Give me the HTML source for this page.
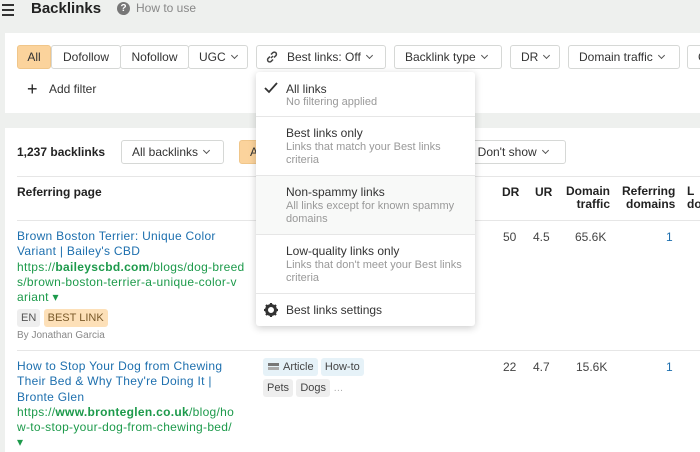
<!DOCTYPE html>
<html><head><style>
*{box-sizing:border-box;margin:0;padding:0}
body{width:700px;height:452px;overflow:hidden;background:#eef0ee;font-family:"Liberation Sans",sans-serif;font-size:12px;color:#222;position:relative}
.a{position:absolute;white-space:nowrap}
.btn{position:absolute;height:24px;border:1px solid #d6d8d6;border-radius:3px;background:#fff;line-height:22px;font-size:12px;color:#333;padding:0 10px;white-space:nowrap}
.chev{display:inline-block;width:5px;height:5px;border-right:1.3px solid #555;border-bottom:1.3px solid #555;transform:rotate(45deg);margin-left:6px;position:relative;top:-3px}
.panel{position:absolute;background:#fff;left:5px;right:0}
.h{font-weight:bold;font-size:12px;color:#222}
.blue{color:#1d6fae}
.green{color:#1d9a4b}
.rp{letter-spacing:0.3px}
.menu{position:absolute;left:256px;top:72px;width:219px;height:254px;background:#fff;border-radius:3px;box-shadow:0 2px 8px rgba(0,0,0,.2)}
.mi{position:absolute;left:0;right:0;border-bottom:1px solid #e6e6e6}
.mt{position:absolute;left:30px;font-size:12px;color:#333}
.ms{position:absolute;left:30px;font-size:11px;color:#999;line-height:13px;white-space:normal;width:180px}
.tag{display:inline-block;height:18px;line-height:18px;padding:0 4px;border-radius:3px;font-size:11px}
</style></head><body>
<div class="a" style="left:2px;top:4px;width:12px;height:2px;background:#333;box-shadow:0 5px 0 #333,0 10px 0 #333"></div>
<div class="a" style="left:31px;top:0px;font-size:15px;font-weight:bold;color:#222">Backlinks</div>
<div class="a" style="left:117px;top:2px;width:13px;height:13px;border-radius:50%;background:#777;color:#fff;font-size:10px;font-weight:bold;text-align:center;line-height:13px">?</div>
<div class="a" style="left:136px;top:1px;font-size:12px;color:#888">How to use</div>

<div class="panel" style="top:33px;height:80px"></div>
<div class="btn" style="left:17px;top:45px;width:34px;background:#fbd39c;border-color:#f0c68a;padding:0;text-align:center">All</div>
<div class="btn" style="left:51px;top:45px;width:70px;padding:0;text-align:center">Dofollow</div>
<div class="btn" style="left:120px;top:45px;width:69px;padding:0;text-align:center">Nofollow</div>
<div class="btn" style="left:188px;top:45px;width:60px;padding:0 0 0 10px">UGC<span class="chev"></span></div>
<div class="btn" style="left:256px;top:45px;width:130px;padding-left:30px">Best links: Off<span class="chev"></span></div>
<svg class="a" style="left:265px;top:50px" width="14" height="14" viewBox="0 0 14 14" fill="none" stroke="#444" stroke-width="1.5"><path d="M6 8l2-2M5 6.5L3.2 8.3a2 2 0 003 3L8 9.5M9 7.5l1.8-1.8a2 2 0 00-3-3L6 4.5"/></svg>
<div class="btn" style="left:394px;top:45px;width:108px">Backlink type<span class="chev"></span></div>
<div class="btn" style="left:510px;top:45px;width:50px;padding:0 0 0 10px">DR<span class="chev"></span></div>
<div class="btn" style="left:568px;top:45px;width:112px">Domain traffic<span class="chev"></span></div>
<div class="btn" style="left:687px;top:45px;width:30px">C</div>
<div class="a" style="left:27px;top:80px;font-size:18px;color:#222;line-height:18px">+</div>
<div class="a" style="left:49px;top:82px;color:#333">Add filter</div>

<div class="panel" style="top:128px;bottom:0"></div>
<div class="a h" style="left:17px;top:145px">1,237 backlinks</div>
<div class="btn" style="left:121px;top:140px;width:103px">All backlinks<span class="chev"></span></div>
<div class="btn" style="left:239px;top:140px;width:30px;background:#fbd39c;border-color:#f0c68a">A</div>
<div class="btn" style="left:450px;top:140px;width:116px;padding-left:20px">: Don't show<span class="chev"></span></div>
<div class="a" style="left:17px;top:176px;right:0;height:1px;background:#e6e6e6"></div>
<div class="a h" style="left:17px;top:185px">Referring page</div>
<div class="a h" style="left:502px;top:185px">DR</div>
<div class="a h" style="left:535px;top:185px">UR</div>
<div class="a h" style="left:566px;top:185px;text-align:right;line-height:13px">Domain<br>traffic</div>
<div class="a h" style="left:622px;top:185px;text-align:right;line-height:13px">Referring<br>domains</div>
<div class="a h" style="left:687px;top:185px;line-height:13px">L<br>do</div>
<div class="a" style="left:17px;top:220px;right:0;height:1px;background:#e6e6e6"></div>

<div class="a rp" style="left:17px;top:229px;line-height:15.3px;font-size:12px;width:240px">
<span class="blue">Brown Boston Terrier: Unique Color<br>Variant | Bailey's CBD</span><br>
<span class="green">https://<b>baileyscbd.com</b>/blogs/dog-breed<br>s/brown-boston-terrier-a-unique-color-v<br>ariant ▾</span></div>
<div class="a" style="left:17px;top:309px"><span class="tag" style="background:#eee;color:#555">EN</span> <span class="tag" style="background:#fde0b8;color:#7a5a2a">BEST LINK</span></div>
<div class="a" style="left:17px;top:330px;font-size:10px;color:#888">By Jonathan Garcia</div>
<div class="a" style="left:503px;top:230px;color:#444">50</div>
<div class="a" style="left:533px;top:230px;color:#444">4.5</div>
<div class="a" style="left:575px;top:230px;color:#444">65.6K</div>
<div class="a blue" style="left:666px;top:230px">1</div>
<div class="a" style="left:17px;top:350px;right:0;height:1px;background:#e6e6e6"></div>

<div class="a rp" style="left:17px;top:359px;line-height:15.3px;font-size:12px;width:240px">
<span class="blue">How to Stop Your Dog from Chewing<br>Their Bed &amp; Why They're Doing It |<br>Bronte Glen</span><br>
<span class="green">https://<b>www.bronteglen.co.uk</b>/blog/ho<br>w-to-stop-your-dog-from-chewing-bed/<br>▾</span></div>
<div class="a" style="left:263px;top:358px"><span class="tag" style="background:#e6f2f8;color:#444;padding-left:20px;position:relative"><span style="position:absolute;left:5px;top:5px;width:11px;height:3px;background:#777;box-shadow:0 4px 0 #aaa"></span>Article</span> <span class="tag" style="background:#e6f2f8;color:#444">How-to</span></div>
<div class="a" style="left:263px;top:379px"><span class="tag" style="background:#eee;color:#444">Pets</span> <span class="tag" style="background:#eee;color:#444">Dogs</span> <span style="color:#aaa;font-size:10px">…</span></div>
<div class="a" style="left:503px;top:360px;color:#444">22</div>
<div class="a" style="left:533px;top:360px;color:#444">4.7</div>
<div class="a" style="left:576px;top:360px;color:#444">15.6K</div>
<div class="a blue" style="left:666px;top:360px">1</div>

<div class="menu">
 <div class="mi" style="top:0;height:45px">
  <svg class="a" style="left:8px;top:10px" width="14" height="12" viewBox="0 0 14 12"><path d="M1 6l4 4 8-9" fill="none" stroke="#333" stroke-width="1.8"/></svg>
  <div class="mt" style="top:10px">All links</div><div class="ms" style="top:24px">No filtering applied</div></div>
 <div class="mi" style="top:45px;height:59px"><div class="mt" style="top:9px">Best links only</div><div class="ms" style="top:24px">Links that match your Best links criteria</div></div>
 <div class="mi" style="top:104px;height:59px;background:#f8f9f8"><div class="mt" style="top:9px">Non-spammy links</div><div class="ms" style="top:24px">All links except for known spammy domains</div></div>
 <div class="mi" style="top:163px;height:59px"><div class="mt" style="top:9px">Low-quality links only</div><div class="ms" style="top:24px">Links that don't meet your Best links criteria</div></div>
 <svg class="a" style="left:8px;top:231px" width="14" height="14" viewBox="0 0 14 14"><circle cx="7" cy="7" r="4.5" fill="none" stroke="#333" stroke-width="3"/><path d="M7 0v3M7 11v3M0 7h3M11 7h3M2 2l2 2M10 10l2 2M12 2l-2 2M2 12l2-2" stroke="#333" stroke-width="2.2"/></svg>
 <div class="mt" style="top:231px">Best links settings</div>
</div>
</body></html>
